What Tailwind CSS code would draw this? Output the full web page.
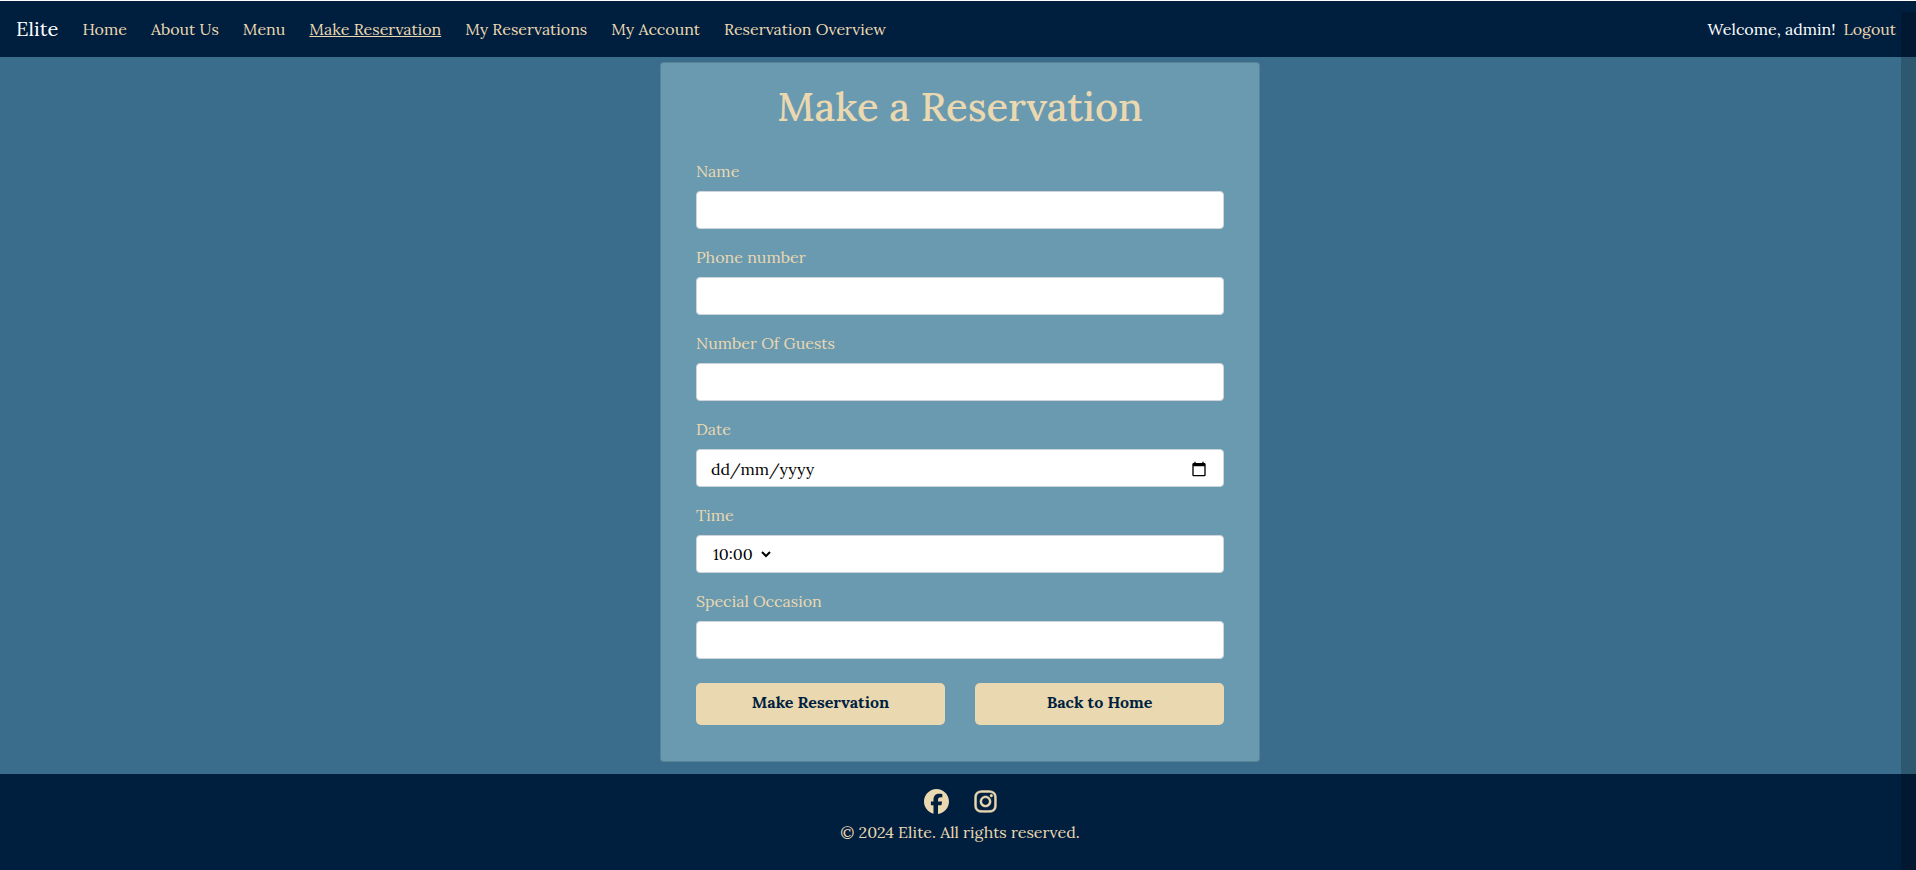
<!DOCTYPE html>
<html lang="en-GB">
<head>
<meta charset="utf-8">
<meta name="viewport" content="width=device-width, initial-scale=1">
<title>Elite - Make a Reservation</title>
<script src="https://cdn.jsdelivr.net/npm/@tailwindcss/browser@4"></script>
</head>
<body class="relative flex min-h-screen flex-col border-t border-white bg-[#3a6d8c] font-['Lora','Liberation_Serif',serif] text-base leading-6 text-[#ead8b1]">
  <nav class="flex h-14 shrink-0 items-center justify-between bg-[#001f3f] pr-5 pl-4">
    <div class="flex items-center gap-6">
      <a href="#" class="text-xl text-white">Elite</a>
      <ul class="flex items-center gap-6 whitespace-nowrap">
        <li><a href="#">Home</a></li>
        <li><a href="#">About Us</a></li>
        <li><a href="#">Menu</a></li>
        <li><a href="#" class="underline" aria-current="page">Make Reservation</a></li>
        <li><a href="#">My Reservations</a></li>
        <li><a href="#">My Account</a></li>
        <li><a href="#">Reservation Overview</a></li>
      </ul>
    </div>
    <div class="flex gap-2 whitespace-nowrap">
      <span class="text-white">Welcome, admin!</span>
      <a href="#">Logout</a>
    </div>
  </nav>

  <main class="flex grow justify-center pt-[5px] pb-3 pl-1">
    <section class="w-full max-w-[600px] rounded border border-black/15 bg-[#6a9ab0] px-[35px] pt-5 pb-9">
      <h1 class="mb-7 text-center text-[40px] leading-12 font-medium">Make a Reservation</h1>
      <form class="flex flex-col gap-4">
        <div class="flex flex-col gap-2">
          <label for="name">Name</label>
          <input id="name" type="text" class="h-[38px] w-full rounded border border-[#ced4da] bg-white px-3 text-black">
        </div>
        <div class="flex flex-col gap-2">
          <label for="phone">Phone number</label>
          <input id="phone" type="tel" class="h-[38px] w-full rounded border border-[#ced4da] bg-white px-3 text-black">
        </div>
        <div class="flex flex-col gap-2">
          <label for="guests">Number Of Guests</label>
          <input id="guests" type="text" inputmode="numeric" class="h-[38px] w-full rounded border border-[#ced4da] bg-white px-3 text-black">
        </div>
        <div class="flex flex-col gap-2">
          <label for="date">Date</label>
          <div class="flex h-[38px] items-center rounded border border-[#ced4da] bg-white pt-[2px] pr-4 pl-[14px]">
            <input id="date" type="text" placeholder="dd/mm/yyyy" class="min-w-0 grow text-black outline-none placeholder:text-black">
            <button type="button" aria-label="Open calendar" class="text-black">
              <svg class="size-4" viewBox="0 0 24 24" fill="currentColor"><path d="M20 3h-1V1h-2v2H7V1H5v2H4c-1.100 0-2 .9-2 2v16c0 1.100.9 2 2 2h16c1.100 0 2-.9 2-2V5c0-1.100-.9-2-2-2zm0 18H4V8h16v13z"/></svg>
            </button>
          </div>
        </div>
        <div class="flex flex-col gap-2">
          <label for="time">Time</label>
          <div class="flex h-[38px] items-center rounded border border-[#ced4da] bg-white px-3">
            <select id="time" class="w-[65px] bg-white text-black">
              <option>10:00</option>
              <option>11:00</option>
              <option>12:00</option>
            </select>
          </div>
        </div>
        <div class="flex flex-col gap-2">
          <label for="occasion">Special Occasion</label>
          <input id="occasion" type="text" class="h-[38px] w-full rounded border border-[#ced4da] bg-white px-3 text-black">
        </div>
        <div class="mt-2 grid grid-cols-2 gap-[30px] font-bold text-[#001f3f]">
          <button type="submit" class="h-[42px] rounded-[5px] bg-[#ead8b1] pb-1">Make Reservation</button>
          <button type="button" class="h-[42px] rounded-[5px] bg-[#ead8b1] pb-1">Back to Home</button>
        </div>
      </form>
    </section>
  </main>

  <footer class="flex h-24 shrink-0 flex-col items-center gap-1.5 bg-[#001f3f] pt-[15px] pl-1">
    <div class="flex h-[25px] items-center gap-6 pl-[2px]">
      <a href="#" aria-label="Facebook"><svg class="size-[25px]" viewBox="0 0 512 512" fill="currentColor"><path d="M512 256C512 114.600 397.400 0 256 0S0 114.600 0 256C0 376 82.700 476.800 194.200 504.500V334.200H141.400V256h52.800V222.300c0-87.100 39.400-127.500 125-127.500c16.200 0 44.200 3.200 55.700 6.400V172c-6-.6-16.500-1-29.600-1c-42 0-58.200 15.900-58.200 57.200V256h83.600l-14.400 78.200H287V510.100C413.800 494.800 512 386.900 512 256z"/></svg></a>
      <a href="#" aria-label="Instagram"><svg class="size-[25px]" viewBox="-32 0 512 512" fill="currentColor" stroke="currentColor" stroke-width="10"><path d="M224.100 141c-63.600 0-114.900 51.300-114.900 114.900s51.300 114.900 114.900 114.900S339 319.500 339 255.900 287.700 141 224.100 141zm0 189.600c-41.100 0-74.700-33.500-74.700-74.700s33.500-74.700 74.700-74.700 74.700 33.500 74.700 74.700-33.600 74.700-74.700 74.700zm146.400-194.300c0 14.900-12 26.800-26.800 26.800-14.900 0-26.800-12-26.800-26.800s12-26.800 26.800-26.800 26.800 12 26.800 26.800zm76.100 27.200c-1.700-35.900-9.900-67.700-36.200-93.900-26.200-26.200-58-34.400-93.900-36.200-37-2.100-147.900-2.100-184.900 0-35.800 1.700-67.600 9.900-93.900 36.100s-34.400 58-36.200 93.900c-2.100 37-2.100 147.900 0 184.900 1.700 35.900 9.900 67.700 36.200 93.900s58 34.400 93.900 36.200c37 2.100 147.900 2.100 184.900 0 35.900-1.700 67.700-9.900 93.900-36.200 26.200-26.200 34.400-58 36.200-93.900 2.100-37 2.100-147.800 0-184.800zM398.800 388c-7.800 19.600-22.900 34.700-42.600 42.600-29.500 11.700-99.500 9-132.100 9s-102.700 2.600-132.100-9c-19.600-7.800-34.700-22.900-42.600-42.600-11.700-29.500-9-99.500-9-132.100s-2.600-102.700 9-132.100c7.800-19.600 22.900-34.700 42.600-42.600 29.500-11.700 99.500-9 132.100-9s102.700-2.600 132.100 9c19.600 7.800 34.700 22.900 42.600 42.600 11.700 29.500 9 99.500 9 132.100s2.700 102.700-9 132.100z"/></svg></a>
    </div>
    <p>© 2024 Elite. All rights reserved.</p>
  </footer>

  <!-- Scrollbar track over the page edge -->
  <div class="pointer-events-none absolute top-[11px] right-0 bottom-0 w-[15px] bg-black/20"></div>
</body>
</html>
